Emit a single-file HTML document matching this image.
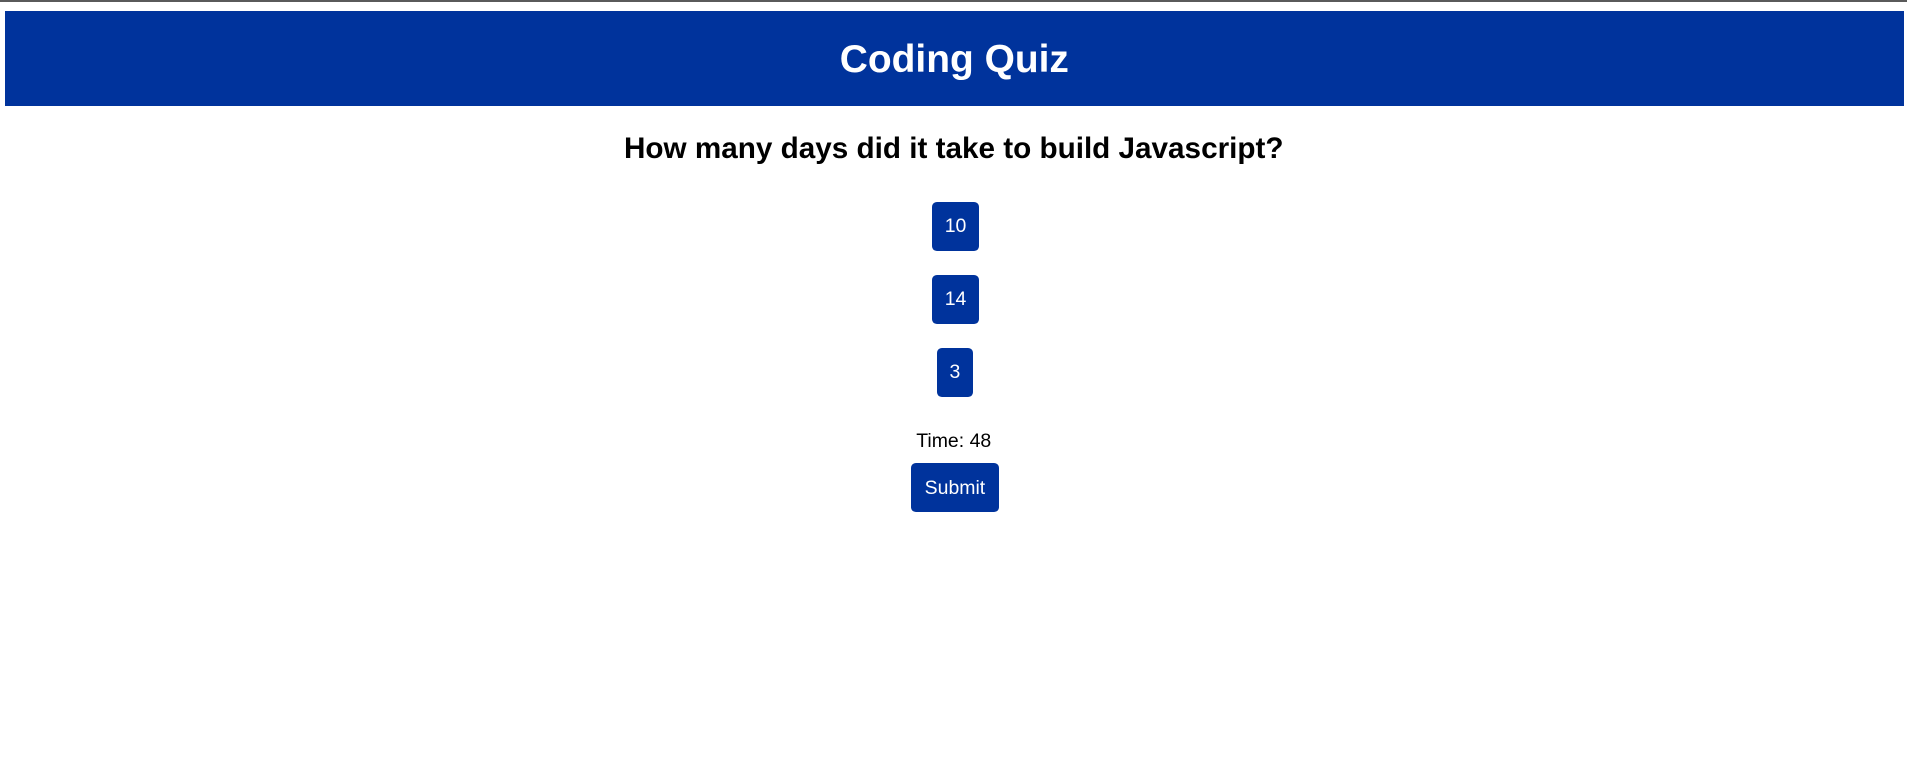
<!DOCTYPE html>
<html><head><style>
html,body{margin:0;padding:0;background:#fff;overflow:hidden}
#w{zoom:1.2165;position:relative;width:1568px;height:628px;font-family:"Liberation Sans",Arial,sans-serif}
.line{position:absolute;left:0;top:0;width:1568px;height:1.5px;background:#5a5a5a}
.hdr{position:absolute;left:4px;top:9px;width:1561px;height:78px;background:#00339c;color:#fff;font-weight:bold;font-size:32px;text-align:center;line-height:80px}
.q{position:absolute;left:0;width:1568px;top:108px;text-align:center;font-weight:bold;font-size:24.4px;line-height:30px;color:#000}
.b{position:absolute;background:#00339c;color:#fff;font-size:16px;border-radius:4px;text-align:center;line-height:41px;height:40px}
.t{position:absolute;left:0;width:1568px;top:354px;text-align:center;font-size:16px;line-height:18px}
</style></head><body><div id="w">
<div class="line"></div>
<div class="hdr">Coding Quiz</div>
<div class="q">How many days did it take to build Javascript?</div>
<div class="b" style="left:766px;top:166px;width:39px">10</div>
<div class="b" style="left:766px;top:226px;width:39px">14</div>
<div class="b" style="left:770px;top:286px;width:30px">3</div>
<div class="t">Time: 48</div>
<div class="b" style="left:749px;top:381px;width:72px;line-height:42px">Submit</div>
</div></body></html>
